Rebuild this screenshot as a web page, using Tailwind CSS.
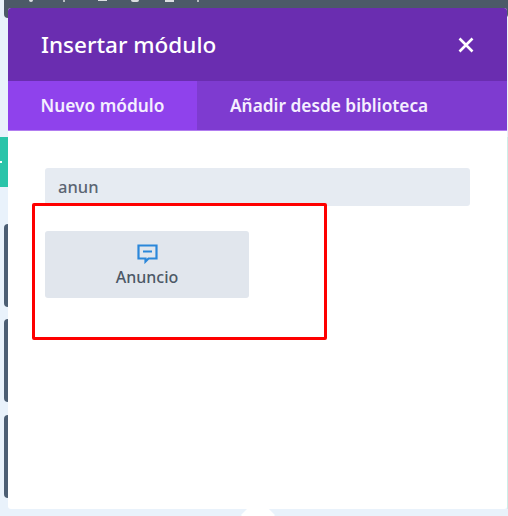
<!DOCTYPE html>
<html lang="es">
<head>
<meta charset="UTF-8">
<title>Insertar módulo</title>
<script src="https://cdn.jsdelivr.net/npm/@tailwindcss/browser@4"></script>
</head>
<body class="bg-[#e9f2fb] font-['Noto_Sans','Open_Sans',sans-serif] overflow-hidden">
<div class="relative h-[516px] w-[508px] overflow-hidden">
    <!-- page behind the modal -->
    <div class="absolute left-[4px] top-[-10px] h-[28px] w-[504px] rounded-[4px] bg-[#4c5a68]">
        <span class="absolute left-[25px] top-[10px] h-[2px] w-[4px] rounded-b-full bg-white/80"></span>
        <span class="absolute left-[59px] top-[10px] h-[2px] w-[2px] bg-white/60"></span>
        <span class="absolute left-[94px] top-[10px] h-[1px] w-[9px] bg-white/80"></span>
        <span class="absolute left-[127px] top-[10px] h-[2px] w-[8px] rounded-b-full bg-white/80"></span>
        <span class="absolute left-[161px] top-[10px] h-[2px] w-[9px] bg-white/80"></span>
        <span class="absolute left-[193px] top-[10px] h-[2px] w-[2px] bg-white/60"></span>
    </div>
    <div class="absolute left-0 top-[137px] h-[50px] w-[8px] bg-[#29c4a9]">
        <span class="absolute left-0 top-[24px] h-[2px] w-[2px] bg-white"></span>
    </div>
    <div class="absolute left-[4px] top-[224px] h-[83px] w-[8px] rounded-l-[4px] bg-[#4c5e73]"></div>
    <div class="absolute left-[4px] top-[319px] h-[83px] w-[8px] rounded-l-[4px] bg-[#4c5e73]"></div>
    <div class="absolute left-[4px] top-[415px] h-[83px] w-[8px] rounded-l-[4px] bg-[#4c5e73]"></div>
    <div class="absolute right-0 top-[137px] h-[372px] w-[1px] bg-[#cdeee8]"></div>

    <!-- modal -->
    <div class="absolute left-[8px] top-[8px] flex h-[501px] w-[499px] flex-col overflow-hidden rounded-[3px] bg-white">
        <header class="flex h-[73px] items-center justify-between bg-[#6a2db0] pl-[33px] pr-[33px]">
            <h1 class="text-[22.5px] font-medium text-white">Insertar módulo</h1>
            <svg class="h-[16px] w-[16px]" viewBox="0 0 16 16" fill="none" stroke="white" stroke-width="2.6"><path d="M1.5 1.5l13 13M14.5 1.5l-13 13"/></svg>
        </header>
        <nav class="flex h-[50px] border-b border-[#b27df0] bg-[#7e3bd0] text-[17.3px] font-semibold text-[#f5efff]">
            <a class="flex w-[189px] items-center justify-center bg-[#8f42ec]">Nuevo módulo</a>
            <a class="flex items-center pl-[33px]">Añadir desde biblioteca</a>
        </nav>
        <main class="px-[37px] pt-[37px]">
            <div class="flex h-[38px] w-[425px] items-center rounded-[3px] bg-[#e6ebf2] pl-[13px] text-[16.5px] font-medium text-[#5b6573]">anun</div>
            <div class="mt-[25px] flex h-[67px] w-[204px] flex-col items-center justify-center rounded-[3px] bg-[#e1e6ed] pt-[3px] text-[16px] font-medium leading-[24px] text-[#4c5866]">
                <svg class="h-[20px] w-[21px]" viewBox="0 0 21 20" fill="none"><path d="M1.5 1.5h18v13h-8l-3 3v-3h-7z" stroke="#2b87da" stroke-width="2.2"/><path d="M6 7.5h9" stroke="#2b87da" stroke-width="2.2"/></svg>
                <span class="relative top-[1px]">Anuncio</span>
            </div>
        </main>
    </div>

    <!-- modal pointer -->
    <div class="absolute left-[246px] top-[503px] h-[24px] w-[24px] rotate-45 bg-white"></div>

    <!-- red annotation box -->
    <div class="absolute left-[32px] top-[203px] h-[137px] w-[295px] rounded-[2px] border-[3px] border-[#fe0000]"></div>
</div>
</body>
</html>
